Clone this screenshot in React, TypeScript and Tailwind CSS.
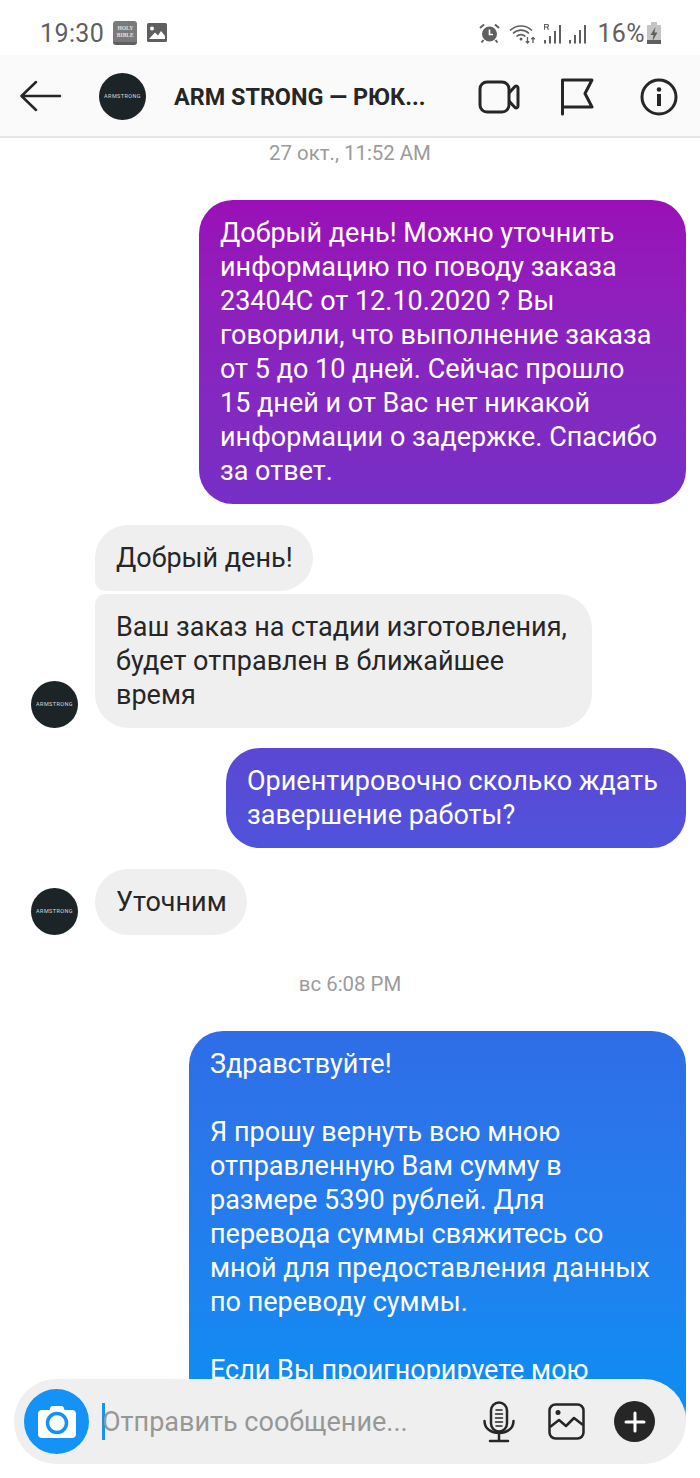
import React from 'react';

const Avatar = () => (
    <div className="w-[47px] h-[47px] shrink-0 rounded-full bg-[#1c2428] flex items-center justify-center">
        <span className="text-[5.5px] leading-none tracking-[0.4px] text-[#d5d8d9]">ARMSTRONG</span>
    </div>
);

const Lines = ({ lines }: { lines: string[] }) => (
    <>
        {lines.map((line, i) => (
            <div key={i} className="h-[34px] whitespace-nowrap">
                {line}
            </div>
        ))}
    </>
);

const StatusIcons = () => (
    <div className="flex items-center">
        <svg width="21" height="21" viewBox="0 0 21 21" className="mr-[9px]">
            <circle cx="10.5" cy="11" r="7.5" fill="#5f5f5f" />
            <path d="M10.5 6.5V11.5H14" stroke="#fff" strokeWidth="1.6" fill="none" />
            <path d="M1 5L5 1.5M20 5L16 1.5" stroke="#5f5f5f" strokeWidth="2" />
            <path d="M4.5 17L2.5 19.5M16.5 17L18.5 19.5" stroke="#5f5f5f" strokeWidth="2" />
        </svg>
        <svg width="26" height="21" viewBox="0 0 26 21" className="mr-[8px]" fill="none" stroke="#5f5f5f">
            <path d="M1 7.5C7 1.5 17 1.5 23 7.5" strokeWidth="1.6" />
            <path d="M4 10.5C8.5 6 15.5 6 20 10.5" strokeWidth="1.6" />
            <path d="M7.5 13.5C10 11 14 11 16.5 13.5" strokeWidth="1.6" />
            <circle cx="12" cy="16" r="1.5" fill="#5f5f5f" stroke="none" />
            <path d="M18.5 14V20M16.8 18.3L18.5 20L20.2 18.3" strokeWidth="1.3" />
            <path d="M24 20V14.5M22.3 16.2L24 14.5L25.7 16.2" strokeWidth="1.3" />
        </svg>
        <svg width="20" height="21" viewBox="0 0 20 21" className="mr-[6px]" fill="#5f5f5f">
            <path d="M1 1H4.2C5.4 1 6 1.7 6 2.7C6 3.6 5.5 4.1 4.8 4.3L6.2 6.7H4.9L3.6 4.4H2.1V6.7H1ZM2.1 2V3.5H4C4.6 3.5 4.9 3.2 4.9 2.7C4.9 2.3 4.6 2 4 2Z" />
            <rect x="1" y="17" width="2" height="3.5" />
            <rect x="6" y="13" width="2" height="7.5" />
            <rect x="11" y="8" width="2" height="12.5" />
            <rect x="16" y="2" width="2" height="18.5" />
        </svg>
        <svg width="19" height="21" viewBox="0 0 19 21" className="mr-[9px]" fill="#5f5f5f">
            <rect x="0" y="17" width="2" height="3.5" />
            <rect x="5" y="12" width="2" height="8.5" />
            <rect x="10" y="7" width="2" height="13.5" />
            <rect x="15" y="2" width="2" height="18.5" />
        </svg>
    </div>
);

const App: React.FC = () => {
    return (
        <div className="relative w-[700px] h-[1478px] overflow-hidden bg-white font-['Roboto',sans-serif] text-[#262626]">
            {/* status bar */}
            <div className="h-[55px] pt-[11px] pl-[40px] pr-[39px] flex items-center justify-between text-[#5f5f5f]">
                <div className="flex items-center">
                    <span className="text-[25px] leading-none tracking-[0.4px]">19:30</span>
                    <div className="ml-[9px] w-[24px] h-[24px] rounded-[3px] bg-[#7a7a7a] border-b-[3px] border-[#5f5f5f] flex flex-col items-center justify-center text-[5.5px] leading-[7px] font-bold text-[#e0e0e0] font-['Liberation_Serif',serif]">
                        <span>HOLY</span>
                        <span>BIBLE</span>
                    </div>
                    <svg width="20" height="20" viewBox="0 0 20 20" className="ml-[10px]">
                        <rect width="20" height="19" rx="1.5" fill="#5f5f5f" />
                        <circle cx="5" cy="5.5" r="2" fill="#fff" />
                        <path d="M2 16L8 9.5L11 12.5L14 8L18 13V16Z" fill="#fff" />
                    </svg>
                </div>
                <div className="flex items-center">
                    <StatusIcons />
                    <span className="text-[25px] leading-none tracking-[0.4px]">16%</span>
                    <svg width="14" height="22" viewBox="0 0 14 22" className="ml-[2px]">
                        <rect x="4" y="0" width="6" height="3" fill="#c4c4c4" />
                        <rect x="0" y="3" width="14" height="19" rx="1" fill="#c4c4c4" />
                        <rect x="0" y="18" width="14" height="4" fill="#5f5f5f" />
                        <path d="M8.5 5L3.5 13H6.5L5.5 19L10.5 10.5H7.5Z" fill="#5f5f5f" />
                    </svg>
                </div>
            </div>

            {/* header */}
            <div className="h-[83px] pt-[2px] bg-[#fafafa] border-b-2 border-[#e6e6e6] flex items-center pl-[20px]">
                <svg width="42" height="32" viewBox="0 0 42 32" fill="none" stroke="#262626" strokeWidth="2.5" strokeLinecap="round" strokeLinejoin="round" className="shrink-0 -mt-[1px]">
                    <path d="M40 16H2M16 2L1.5 16L16 30" />
                </svg>
                <div className="ml-[37px]">
                    <Avatar />
                </div>
                <div className="ml-[28px] mt-[2px] w-[253px] text-[23.4px] leading-none font-bold whitespace-nowrap text-[#262626]">
                    ARM STRONG — РЮК...
                </div>
                <svg width="42" height="34" viewBox="0 0 42 34" fill="none" stroke="#262626" strokeWidth="3" strokeLinejoin="round" className="ml-[51px] shrink-0">
                    <rect x="2" y="2" width="29" height="30" rx="7" />
                    <path d="M31 13L37 6.5C38.5 5.5 40 6.5 40 8V26C40 27.5 38.5 28.5 37 27.5L31 21" />
                </svg>
                <svg width="34" height="38" viewBox="0 0 34 38" fill="none" stroke="#262626" strokeWidth="3" strokeLinejoin="round" strokeLinecap="round" className="ml-[40px] shrink-0">
                    <path d="M2.5 36V2H32L25 15.5L32 29H2.5" />
                </svg>
                <svg width="38" height="38" viewBox="0 0 38 38" fill="none" className="ml-[46px] shrink-0">
                    <circle cx="19" cy="19" r="17" stroke="#262626" strokeWidth="3" />
                    <circle cx="19" cy="11.5" r="2.3" fill="#262626" />
                    <rect x="17" y="16" width="4" height="12" fill="#262626" />
                </svg>
            </div>

            {/* messages */}
            <div className="flex flex-col text-[27px] leading-[34px] text-[#262626]">
                <div className="h-[30px] text-center text-[20.4px] leading-[30px] text-[#9b9b9b]">27 окт., 11:52 AM</div>

                <div className="mt-[32px] mr-[14px] ml-auto w-[487px] rounded-[34px] px-[21px] py-[16px] text-white bg-gradient-to-b from-[#9a0fb7] to-[#762fc6]">
                    <Lines
                        lines={[
                            'Добрый день! Можно уточнить',
                            'информацию по поводу заказа',
                            '23404С от 12.10.2020 ? Вы',
                            'говорили, что выполнение заказа',
                            'от 5 до 10 дней. Сейчас прошло',
                            '15 дней и от Вас нет никакой',
                            'информации о задержке. Спасибо',
                            'за ответ.',
                        ]}
                    />
                </div>

                <div className="mt-[21px] ml-[95px] w-[218px] h-[66px] rounded-[33px] rounded-bl-[10px] bg-[#efefef] px-[21px] py-[16px]">
                    <Lines lines={['Добрый день!']} />
                </div>

                <div className="mt-[3px] ml-[31px] flex items-end gap-[17px]">
                    <Avatar />
                    <div className="w-[497px] rounded-[34px] rounded-tl-[10px] bg-[#efefef] px-[21px] py-[16px]">
                        <Lines lines={['Ваш заказ на стадии изготовления,', 'будет отправлен в ближайшее', 'время']} />
                    </div>
                </div>

                <div className="mt-[20px] mr-[14px] ml-auto w-[460px] rounded-[34px] px-[21px] py-[16px] text-white bg-gradient-to-b from-[#5b47d2] to-[#4f53dc]">
                    <Lines lines={['Ориентировочно сколько ждать', 'завершение работы?']} />
                </div>

                <div className="mt-[21px] ml-[31px] flex items-end gap-[17px]">
                    <Avatar />
                    <div className="w-[152px] h-[66px] rounded-[33px] bg-[#efefef] px-[21px] py-[16px]">
                        <Lines lines={['Уточним']} />
                    </div>
                </div>

                <div className="mt-[34px] h-[30px] text-center text-[20.4px] leading-[30px] text-[#9b9b9b]">вс 6:08 PM</div>

                <div className="mt-[32px] mr-[14px] ml-auto w-[497px] rounded-t-[34px] pl-[21px] pt-[16px] pb-[35px] text-white bg-gradient-to-b from-[#2f6de6] via-[#0b8df3] via-[96%] to-white">
                    <Lines
                        lines={[
                            'Здравствуйте!',
                            '',
                            'Я прошу вернуть всю мною',
                            'отправленную Вам сумму в',
                            'размере 5390 рублей. Для',
                            'перевода суммы свяжитесь со',
                            'мной для предоставления данных',
                            'по переводу суммы.',
                            '',
                            'Если Вы проигнорируете мою',
                        ]}
                    />
                </div>
            </div>

            {/* composer lies over the last message */}
            <div className="absolute left-[14px] top-[1379px] w-[672px] h-[85px] rounded-[42px] bg-[#efefef] flex items-center pl-[10px]">
                <div className="w-[65px] h-[65px] rounded-full bg-[#1492f5] flex items-center justify-center shrink-0">
                    <svg width="40" height="34" viewBox="0 0 40 34">
                        <path d="M13 3.5C13.5 1.5 14.5 1 16 1H24C25.5 1 26.5 1.5 27 3.5L27.5 5H35C37.5 5 39 6.5 39 9V29C39 31.5 37.5 33 35 33H5C2.5 33 1 31.5 1 29V9C1 6.5 2.5 5 5 5H12.5Z" fill="#fff" />
                        <circle cx="20" cy="18" r="9.5" fill="none" stroke="#1492f5" strokeWidth="3.5" />
                    </svg>
                </div>
                <div className="ml-[13px] w-[3px] h-[37px] bg-[#1492f5] shrink-0" />
                <div className="-ml-[3px] mt-[2px] w-[381px] text-[27px] leading-none text-[#979797] whitespace-nowrap">Отправить сообщение...</div>
                <svg width="32" height="42" viewBox="0 0 32 42" fill="none" stroke="#262626" strokeWidth="2.5" strokeLinecap="round" className="shrink-0">
                    <rect x="8" y="1.5" width="16" height="29" rx="8" />
                    <path d="M1.5 20C1.5 36 30.5 36 30.5 20M16 33V40M7 40H25" />
                    <path d="M13 9H19M12.5 13H19.5M12.5 17H19.5M12.5 21H19.5M13 25H19" strokeWidth="1.5" />
                </svg>
                <svg width="37" height="37" viewBox="0 0 37 37" fill="none" stroke="#262626" strokeWidth="2.5" strokeLinejoin="round" className="ml-[33px] shrink-0">
                    <rect x="1.5" y="1.5" width="34" height="34" rx="6" />
                    <circle cx="10" cy="9.5" r="2.5" fill="#262626" stroke="none" />
                    <path d="M2 24L11 17L18 23L26 15L35 22" />
                </svg>
                <div className="ml-[29px] w-[41px] h-[41px] rounded-full bg-[#262626] flex items-center justify-center shrink-0">
                    <svg width="22" height="22" viewBox="0 0 22 22" stroke="#fff" strokeWidth="3" strokeLinecap="round">
                        <path d="M11 2V20M2 11H20" />
                    </svg>
                </div>
            </div>
        </div>
    );
};

export default App;
